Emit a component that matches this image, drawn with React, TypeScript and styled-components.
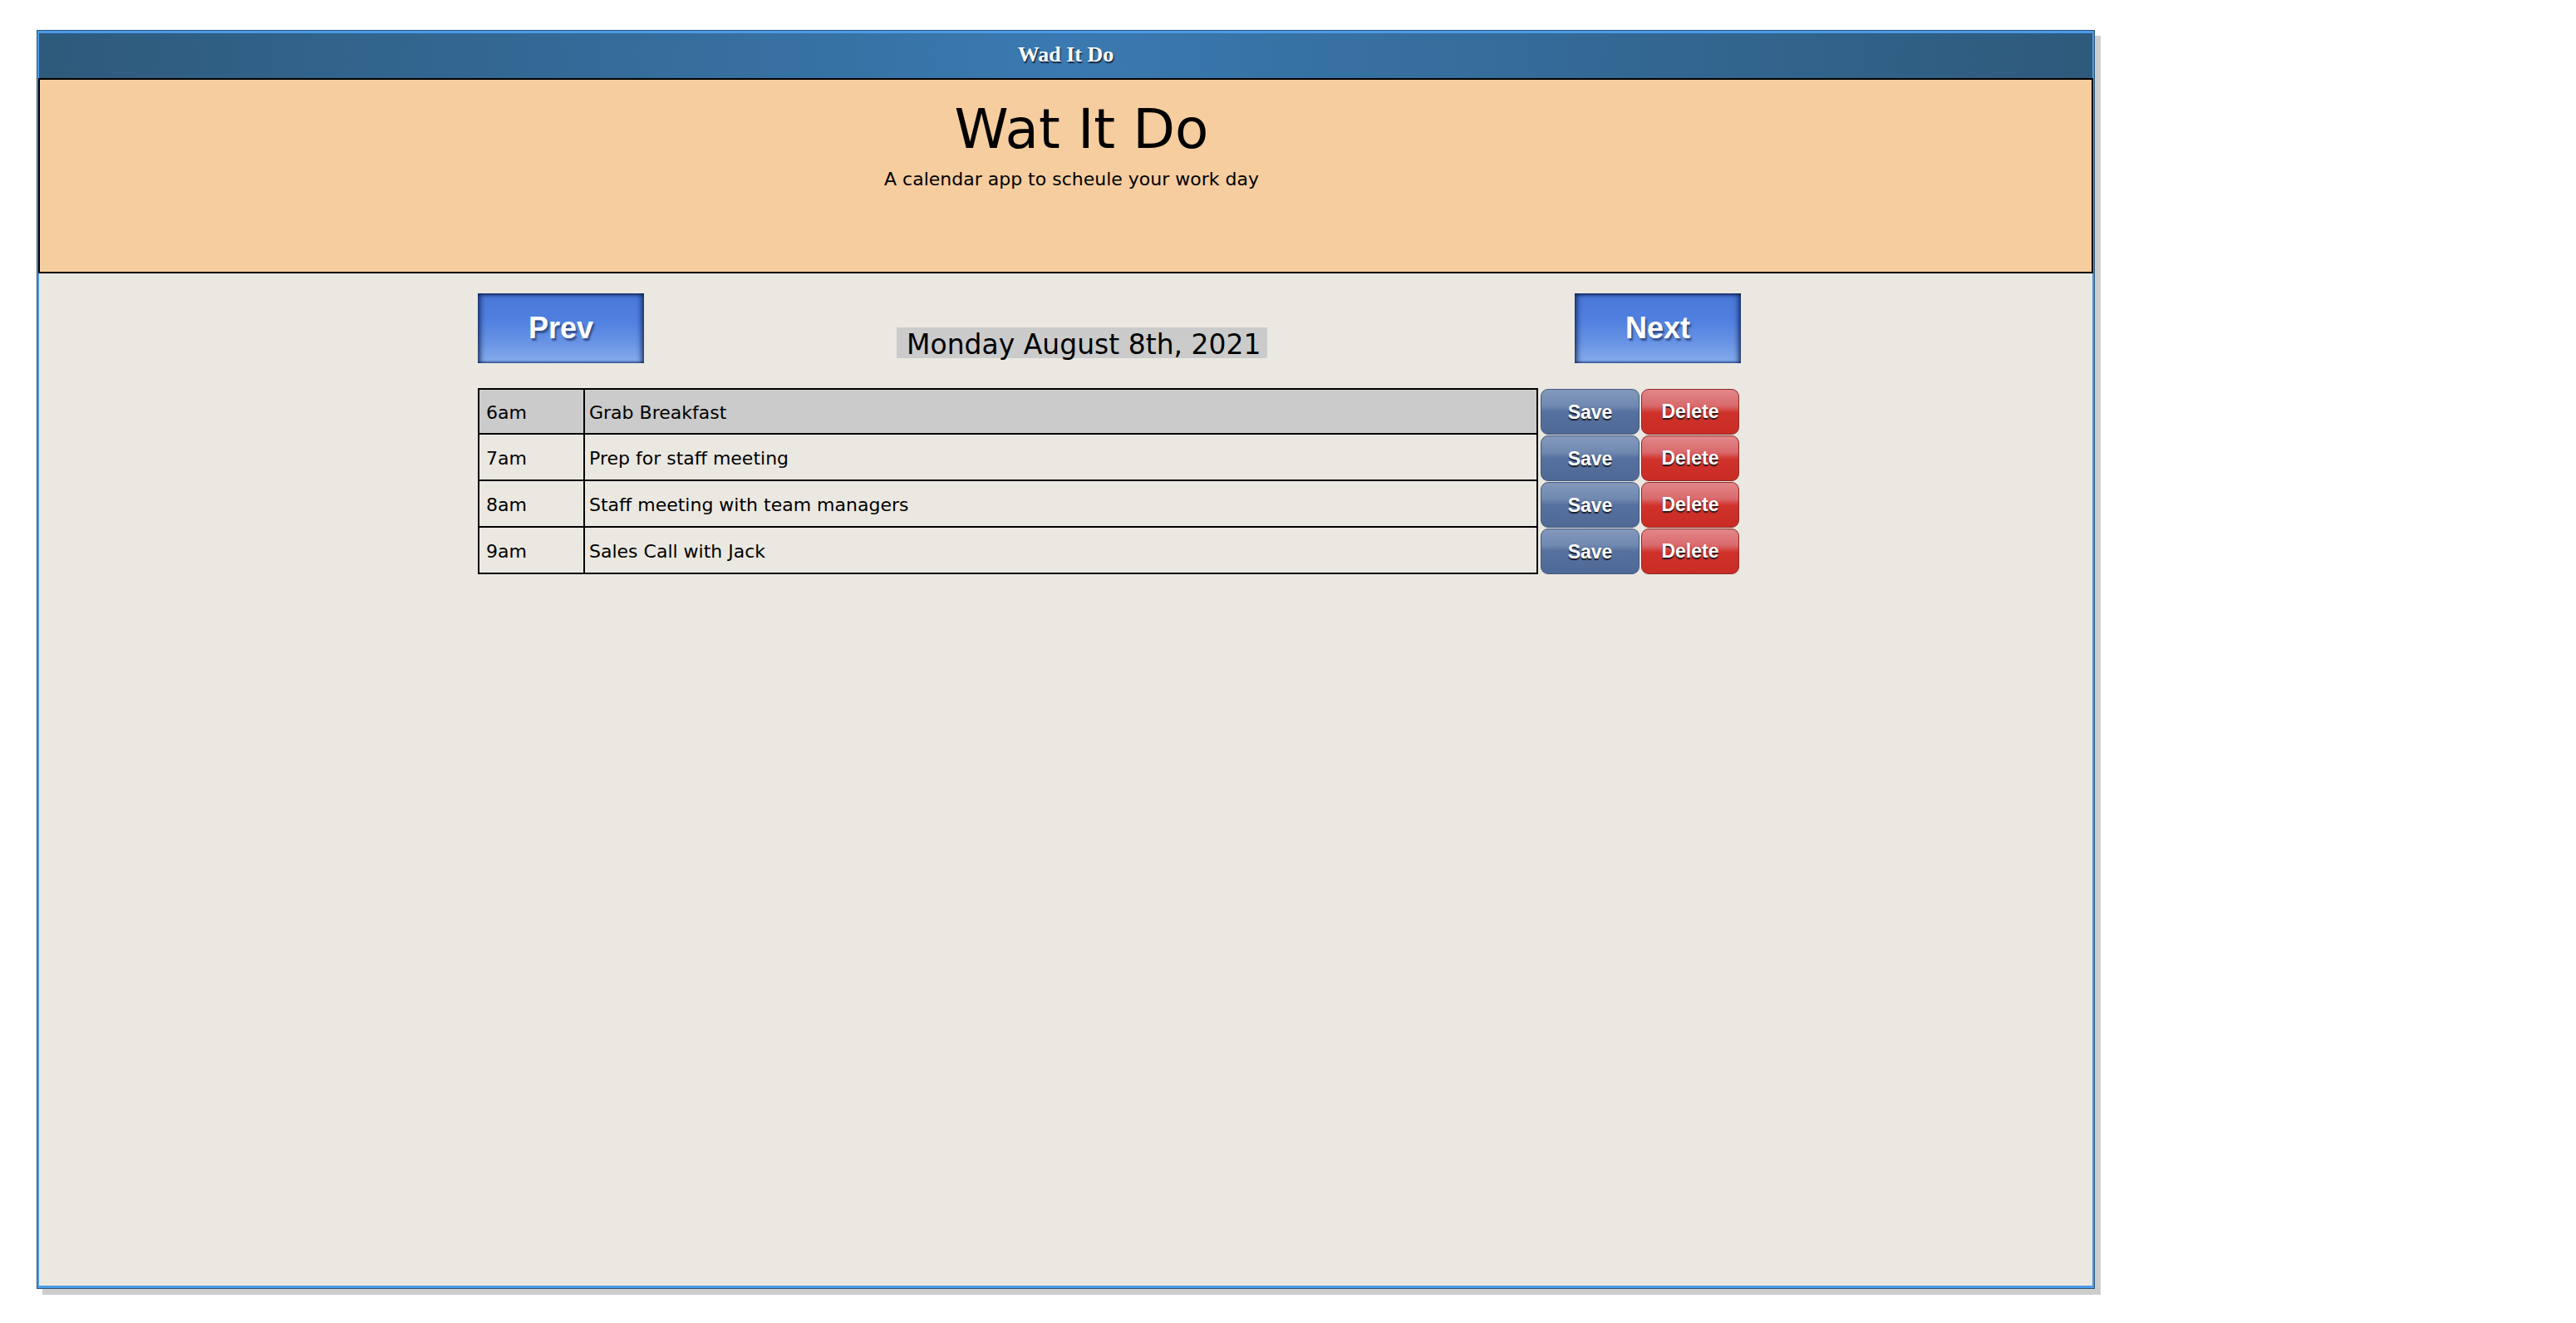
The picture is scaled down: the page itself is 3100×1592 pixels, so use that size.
import React from "react";
import styled, { createGlobalStyle } from "styled-components";

const Global = createGlobalStyle`
  html, body { margin: 0; padding: 0; background: #ffffff; }
  body { font-family: "DejaVu Sans", sans-serif; }
  * { box-sizing: border-box; }
`;

const comic = `"Comic Sans MS", "DejaVu Sans", sans-serif`;
const arial = `"Liberation Sans", Arial, sans-serif`;

const Page = styled.div`
  padding: 36px 0 0 44px;
  min-height: 1592px;
`;

const Window = styled.div`
  width: 2477px;
  height: 1515px;
  border: 1px solid #2a5478;
  box-shadow: 7px 7px 0 #cdcdcd;
  display: flex;
  flex-direction: column;
`;

const Frame = styled.div`
  flex: 1;
  border: 3px solid #4a9ae6;
  border-left-width: 2px;
  border-right-width: 2px;
  display: flex;
  flex-direction: column;
  background: #ebe8e1;
`;

const TitleBar = styled.div`
  height: 54px;
  display: flex;
  align-items: center;
  justify-content: center;
  background: linear-gradient(90deg, #2e5a7b 0%, #3a79b1 50%, #2e5a7b 100%);
  color: #ffffff;
  font-family: "Liberation Serif", "Times New Roman", serif;
  font-weight: bold;
  font-size: 26px;
  text-shadow: 1px 2px 1px rgba(10, 20, 35, 0.85);
  padding-bottom: 2px;
`;

const Header = styled.header`
  height: 235px;
  border: 2px solid #000000;
  margin: 0 -1px;
  background: #f5cd9f;
  display: flex;
  flex-direction: column;
  align-items: center;
  padding-top: 21px;
  font-family: ${comic};
  color: #000000;
`;

const Title = styled.h1`
  margin: 0;
  font-size: 66px;
  font-weight: normal;
  line-height: normal;
  padding-left: 38px;
`;

const Subtitle = styled.p`
  margin: 9px 0 0 0;
  font-size: 22px;
  line-height: normal;
  padding-left: 14px;
`;

const Body = styled.main`
  flex: 1;
  padding: 24px 0 0 528px;
`;

const Column = styled.div`
  width: 1520px;
  display: flex;
  flex-direction: column;
`;

const Nav = styled.div`
  display: grid;
  grid-template-columns: 200px 1fr 200px;
  align-items: start;
  height: 84px;
`;

const NavButton = styled.button`
  width: 200px;
  height: 84px;
  border: none;
  padding: 0;
  cursor: pointer;
  color: #ffffff;
  font-family: ${arial};
  font-weight: bold;
  font-size: 36px;
  text-shadow: 2px 3px 2px rgba(15, 30, 70, 0.55);
  background: linear-gradient(180deg, #4977d8 0%, #4f80e0 38%, #6893e5 70%, #87adec 100%);
  box-shadow:
    inset 0 3px 4px -1px rgba(12, 28, 72, 0.85),
    inset 6px 0 6px -3px rgba(12, 28, 72, 0.75),
    inset -6px 0 6px -3px rgba(12, 28, 72, 0.75),
    inset 0 -3px 2px -1px rgba(50, 85, 160, 0.7);
`;

const DateLabel = styled.div`
  justify-self: start;
  margin: 41px 0 0 304px;
  height: 37px;
  padding: 4px 7px 0 12px;
  line-height: 34px;
  background: #cbcbcb;
  font-family: ${comic};
  font-size: 33px;
  color: #000000;
  white-space: nowrap;
`;

const Schedule = styled.div`
  margin-top: 30px;
  display: flex;
  flex-direction: column;
`;

const Row = styled.div`
  display: flex;
  height: 56px;
`;

const Entry = styled.div<{ $first?: boolean; $active?: boolean }>`
  width: 1276px;
  display: flex;
  border: 2px solid #000000;
  border-top-width: ${(p) => (p.$first ? "2px" : "0")};
  background: ${(p) => (p.$active ? "#cbcbcb" : "#ebe8e1")};
  font-family: ${comic};
  font-size: 22px;
  color: #000000;
`;

const Time = styled.div`
  width: 127px;
  border-right: 2px solid #000000;
  padding: 2px 0 0 8px;
  display: flex;
  align-items: center;
`;

const Task = styled.div`
  flex: 1;
  padding: 2px 0 0 5px;
  display: flex;
  align-items: center;
`;

const ActionButton = styled.button<{ $tone: "save" | "delete" }>`
  height: 55px;
  margin: 1px 0 0 ${(p) => (p.$tone === "save" ? "3px" : "2px")};
  width: ${(p) => (p.$tone === "save" ? "119px" : "118px")};
  border-radius: 9px;
  padding: ${(p) => (p.$tone === "save" ? "2px 0 0" : "0")};
  cursor: pointer;
  color: #ffffff;
  font-family: ${arial};
  font-weight: bold;
  font-size: 23px;
  text-shadow: 0 2px 1px rgba(20, 20, 25, 0.9);
  border: 1px solid ${(p) => (p.$tone === "save" ? "#44597d" : "#8e2925")};
  background: ${(p) =>
    p.$tone === "save"
      ? "linear-gradient(180deg, #8399bc 0%, #7089b0 36%, #56719f 50%, #4f6996 100%)"
      : "linear-gradient(180deg, #e2878a 0%, #d96a6c 36%, #d0322b 52%, #c92b25 100%)"};
`;

const rows = [
  { time: "6am", task: "Grab Breakfast", active: true },
  { time: "7am", task: "Prep for staff meeting", active: false },
  { time: "8am", task: "Staff meeting with team managers", active: false },
  { time: "9am", task: "Sales Call with Jack", active: false },
];

export default function App() {
  return (
    <Page>
      <Global />
      <Window>
        <Frame>
          <TitleBar>Wad It Do</TitleBar>
          <Header>
            <Title>Wat It Do</Title>
            <Subtitle>A calendar app to scheule your work day</Subtitle>
          </Header>
          <Body>
            <Column>
              <Nav>
                <NavButton>Prev</NavButton>
                <DateLabel>Monday August 8th, 2021</DateLabel>
                <NavButton>Next</NavButton>
              </Nav>
              <Schedule>
                {rows.map((r, i) => (
                  <Row key={r.time}>
                    <Entry $first={i === 0} $active={r.active}>
                      <Time>{r.time}</Time>
                      <Task>{r.task}</Task>
                    </Entry>
                    <ActionButton $tone="save">Save</ActionButton>
                    <ActionButton $tone="delete">Delete</ActionButton>
                  </Row>
                ))}
              </Schedule>
            </Column>
          </Body>
        </Frame>
      </Window>
    </Page>
  );
}
